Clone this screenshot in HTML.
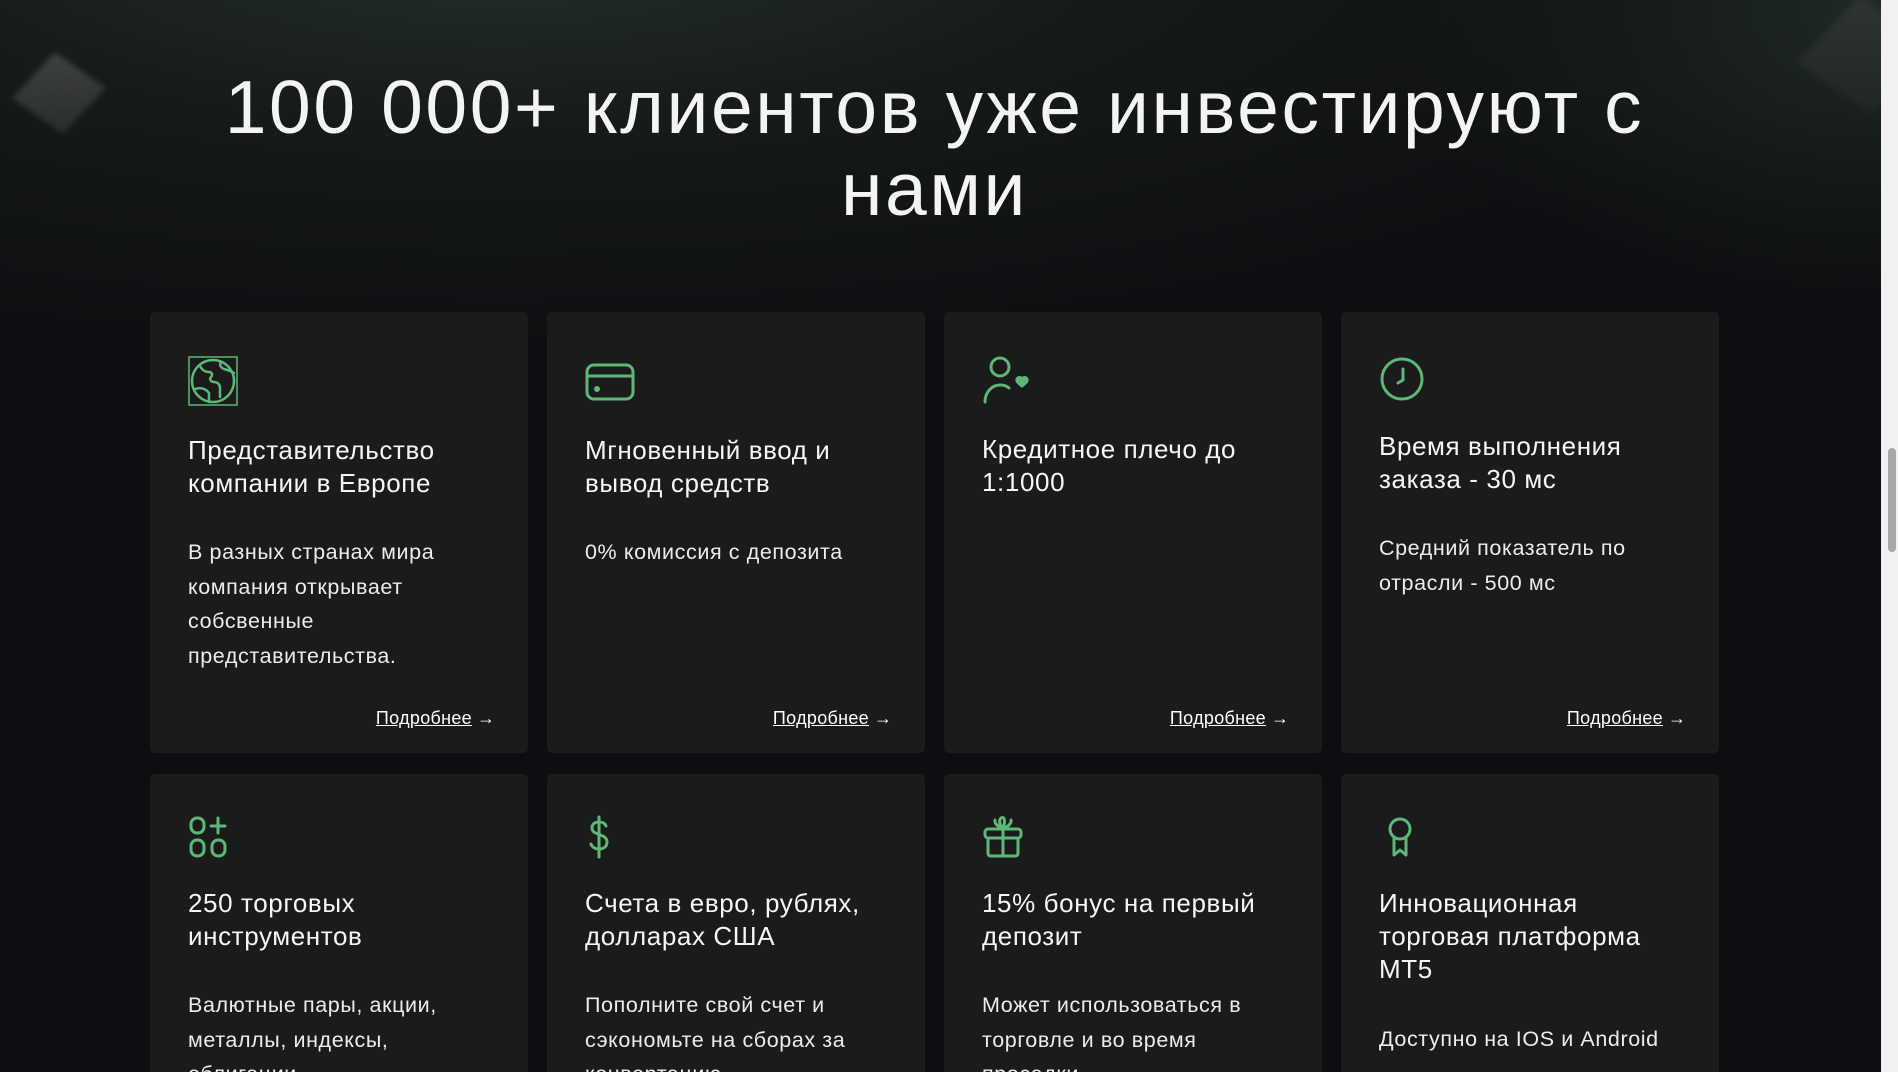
<!DOCTYPE html>
<html><head><meta charset="utf-8"><style>
*{margin:0;padding:0;box-sizing:border-box}
html,body{width:1898px;height:1072px;overflow:hidden}
body{background:#0d0e11;font-family:"Liberation Sans",sans-serif;color:#fff;position:relative}
.bg{position:absolute;left:0;top:0;width:1881px;height:1072px;background:radial-gradient(ellipse 1400px 420px at 500px -60px,#24302a 0%,#161a1a 45%,rgba(13,14,17,0) 100%),radial-gradient(ellipse 500px 300px at 1880px 0,#202a24 0%,rgba(13,14,17,0) 100%),#0d0e11}
.cube{position:absolute;width:62px;height:62px;background:linear-gradient(135deg,#4a4c4c,#303232);transform:rotate(35deg) skewX(-8deg);filter:blur(3px);opacity:.8}
h1{position:absolute;left:150px;width:1569px;top:66px;text-align:center;font-weight:400;font-size:75px;line-height:82px;letter-spacing:2.6px;color:#f4f4f4}
.card{position:absolute;width:378px;height:441px;background:#1b1b1b;border-radius:5px}
.ic{position:absolute;left:38px}
.t{position:absolute;left:38px;right:20px;font-size:26px;line-height:33px;color:#f6f6f6;letter-spacing:0.6px}
.b{position:absolute;left:38px;right:18px;font-size:21.5px;line-height:34.5px;color:#ececec;letter-spacing:0.6px}
.l{position:absolute;right:33px;top:394px;font-size:18px;color:#fff;line-height:24px}
.l u{letter-spacing:0.3px}
svg{fill:none;stroke:#5db878;stroke-width:3;stroke-linecap:round;stroke-linejoin:round}
.sb{position:absolute;left:1881px;top:0;width:17px;height:1072px;background:#f1f1f1}
.th{position:absolute;left:1888px;top:448px;width:8px;height:104px;background:#a8a8a8;border-radius:4px}
</style></head><body>
<div class="bg"></div>
<div class="cube" style="left:28px;top:62px"></div>
<div class="cube" style="left:1820px;top:10px;width:90px;height:90px;opacity:.35"></div>
<h1>100 000+ клиентов уже инвестируют с<br>нами</h1>

<div class="card" style="left:150px;top:312px">
<svg class="ic" style="top:44px;stroke-width:2.5" width="50" height="50" viewBox="0 0 50 50"><rect x="1" y="1" width="48" height="48" stroke-width="1.5"/><circle cx="25" cy="25" r="21"/><path d="M7 33c6-2 11 0 14 4v9M12 10c2 4 5 6 9 6 3 0 4 3 2 5-2 2 0 5 3 5 4 0 6 3 6 6v9M33 6c-2 3 0 6 3 7 4 1 7 2 10 4"/></svg>
<div class="t" style="top:122px">Представительство<br>компании в Европе</div>
<div class="b" style="top:223px">В разных странах мира<br>компания открывает<br>собсвенные<br>представительства.</div>
<div class="l"><u>Подробнее</u> →</div>
</div>

<div class="card" style="left:547px;top:312px">
<svg class="ic" style="top:44px" width="50" height="50" viewBox="0 0 50 50"><rect x="2" y="9" width="46" height="34" rx="7"/><path d="M2 20h46"/><circle cx="12" cy="33" r="1.5" fill="#5db878"/></svg>
<div class="t" style="top:122px">Мгновенный ввод и<br>вывод средств</div>
<div class="b" style="top:223px">0% комиссия с депозита</div>
<div class="l"><u>Подробнее</u> →</div>
</div>

<div class="card" style="left:944px;top:312px">
<svg class="ic" style="top:42px" width="52" height="52" viewBox="0 0 52 52"><circle cx="18" cy="13" r="9"/><path d="M3 48c0-10 7-17 15-17 4 0 7 1 9 3"/><path d="M40 25c-2-3-6-1-5 2 1 2 5 5 5 5s4-3 5-5c1-3-3-5-5-2z" fill="#5db878"/></svg>
<div class="t" style="top:121px">Кредитное плечо до<br>1:1000</div>
<div class="l"><u>Подробнее</u> →</div>
</div>

<div class="card" style="left:1341px;top:312px">
<svg class="ic" style="top:43px" width="48" height="48" viewBox="0 0 48 48"><circle cx="23" cy="24" r="20"/><path d="M24 14v11l-5 3"/></svg>
<div class="t" style="top:118px">Время выполнения<br>заказа - 30 мс</div>
<div class="b" style="top:219px">Средний показатель по<br>отрасли - 500 мс</div>
<div class="l"><u>Подробнее</u> →</div>
</div>

<div class="card" style="left:150px;top:774px">
<svg class="ic" style="top:41px" width="44" height="44" viewBox="0 0 44 44"><rect x="3" y="3" width="13" height="15" rx="6"/><rect x="3" y="25" width="13" height="16" rx="6"/><rect x="24" y="25" width="13" height="16" rx="6"/><path d="M30 3v15M23 11h14"/></svg>
<div class="t" style="top:113px">250 торговых<br>инструментов</div>
<div class="b" style="top:214px">Валютные пары, акции,<br>металлы, индексы,<br>облигации</div>
</div>

<div class="card" style="left:547px;top:774px">
<svg class="ic" style="top:41px" width="44" height="44" viewBox="0 0 44 44"><path d="M14 2v40M21 11c-1-3-4-4-7-4-4 0-7 2-7 6 0 8 15 5 15 14 0 4-3 7-8 7-4 0-7-2-8-5"/></svg>
<div class="t" style="top:113px">Счета в евро, рублях,<br>долларах США</div>
<div class="b" style="top:214px">Пополните свой счет и<br>сэкономьте на сборах за<br>конвертацию</div>
</div>

<div class="card" style="left:944px;top:774px">
<svg class="ic" style="top:41px" width="44" height="44" viewBox="0 0 44 44"><rect x="3" y="14" width="36" height="9" rx="3"/><path d="M6 23v15c0 2 1 3 3 3h24c2 0 3-1 3-3V23M21 14v27M21 14c-3-4-5-8-2-11 3-2 5 2 2 11zM21 14c-4-2-9-5-8-9M21 14c4-2 9-5 8-9"/></svg>
<div class="t" style="top:113px">15% бонус на первый<br>депозит</div>
<div class="b" style="top:214px">Может использоваться в<br>торговле и во время<br>просадки</div>
</div>

<div class="card" style="left:1341px;top:774px">
<svg class="ic" style="top:41px" width="44" height="44" viewBox="0 0 44 44"><circle cx="21" cy="14" r="10"/><path d="M15 23v17l6-5 6 5V23"/></svg>
<div class="t" style="top:113px">Инновационная<br>торговая платформа<br>MT5</div>
<div class="b" style="top:248px">Доступно на IOS и Android</div>
</div>

<div class="sb"></div><div class="th"></div>
</body></html>
